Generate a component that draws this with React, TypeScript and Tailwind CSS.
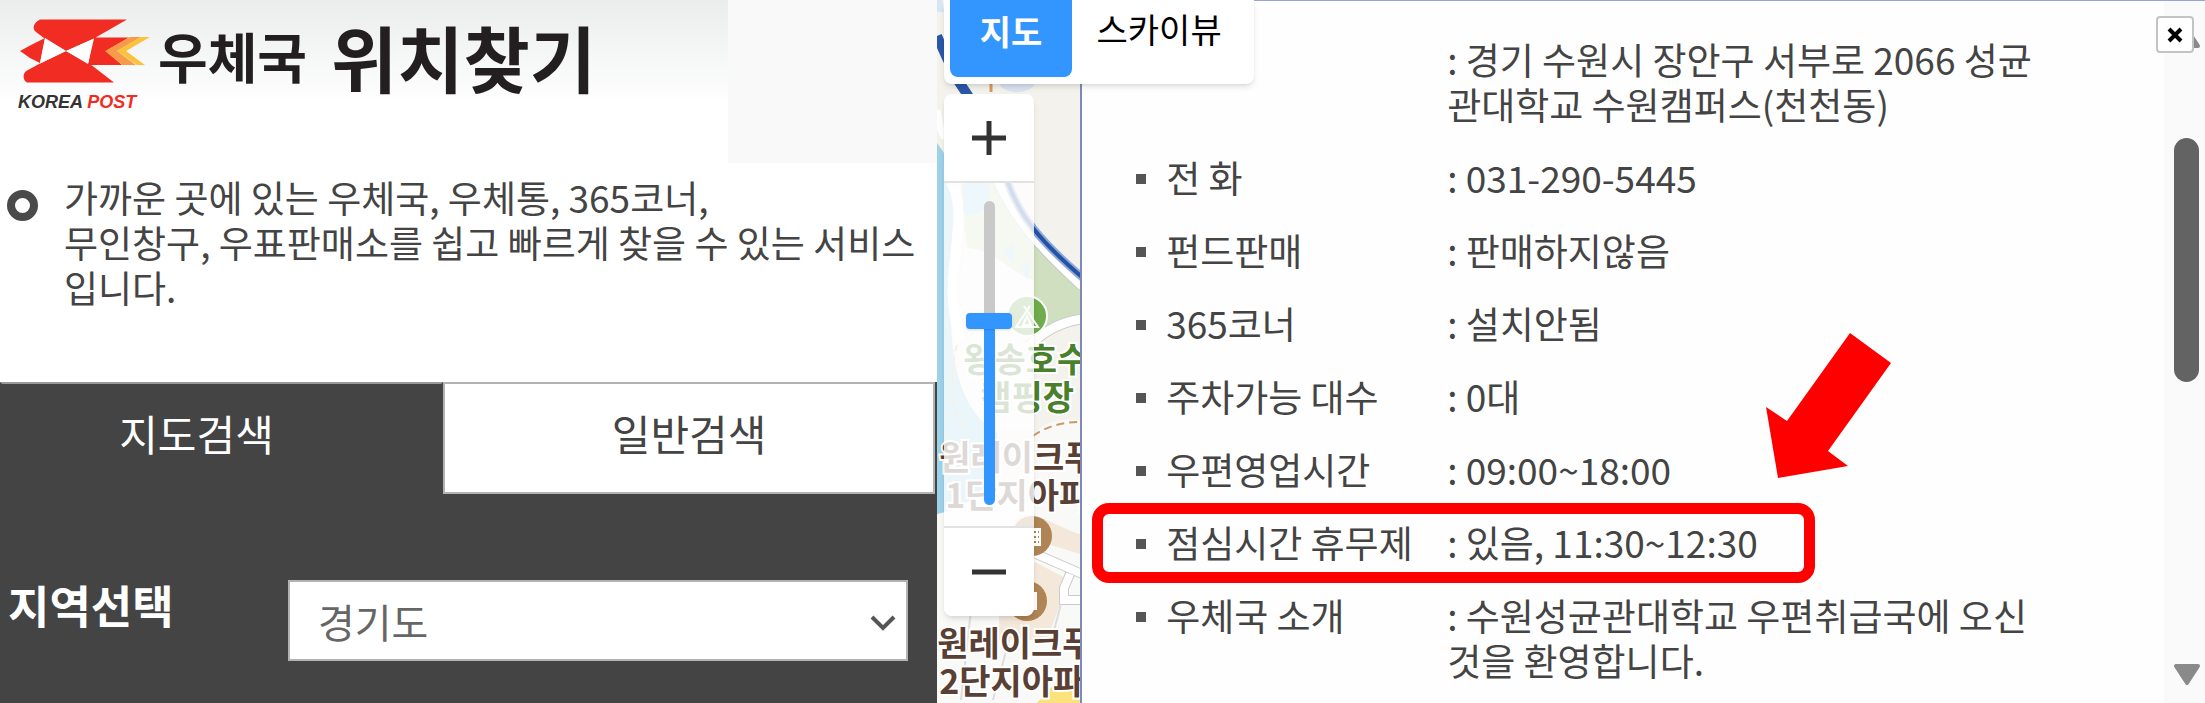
import { useState } from "react";

type Detail = {
  label: string;
  value: string;
  highlighted?: boolean;
};

const details: Detail[] = [
  { label: "", value: "경기 수원시 장안구 서부로 2066 성균관대학교 수원캠퍼스(천천동)" },
  { label: "전 화", value: "031-290-5445" },
  { label: "펀드판매", value: "판매하지않음" },
  { label: "365코너", value: "설치안됨" },
  { label: "주차가능 대수", value: "0대" },
  { label: "우편영업시간", value: "09:00~18:00" },
  { label: "점심시간 휴무제", value: "있음, 11:30~12:30", highlighted: true },
  { label: "우체국 소개", value: "수원성균관대학교 우편취급국에 오신 것을 환영합니다." },
];

function Logo() {
  return (
    <div className="flex w-[132px] flex-col">
      <svg viewBox="18 20 132 66" className="h-[66px] w-[132px]" aria-hidden="true">
        <path
          fill="#f12d23"
          d="M40 21.500h87L93 41l-27 12-22-13-8-6c-4-3-3-9 4-12.500zM45 40L40 65l-10-5-10-7 11-6zM66 53l24 13 24 18.500H27c-4-2-5-9 0-12l13-7zM93 39.500h36L106 53l16 14H88z"
        />
        <path fill="#fff" d="M45 40l21 13-26 12.500zM66 53l28-12.500-6 25.500z" />
        <path fill="#f79a4a" d="M130 39h11l-24 14 19 14h-14l-17-14z" />
        <path fill="#fcc23c" d="M141 39h9l-24 14 19 14h-8l-20-14z" />
      </svg>
      <span className="pt-1 font-['Liberation_Sans',sans-serif] text-[18px] leading-[28px] font-bold whitespace-nowrap text-[#333] italic">
        KOREA <span className="text-[#f12d23]">POST</span>
      </span>
    </div>
  );
}

function SearchPanel() {
  const [tab, setTab] = useState("map");
  const active = "bg-[#444] text-white border-[#444] border-t-[#999]";
  const inactive = "bg-white text-[#444] border-[#b3b3b3]";

  return (
    <section className="flex w-[42.5%] shrink-0 flex-col bg-white">
      <header className="flex h-[163px]">
        <div className="flex flex-1 items-start bg-linear-to-b from-[#ebeded] to-white to-65% pt-[18px] pl-[18px]">
          <Logo />
          <h1 className="flex items-center gap-6 pl-2 leading-[76px] font-bold whitespace-nowrap text-[#231f20]">
            <span className="text-[54px]">우체국</span>
            <span className="text-[72px]">위치찾기</span>
          </h1>
        </div>
        <div className="w-[209px] bg-[#f9f9f9]" />
      </header>

      <div className="flex items-start gap-[26px] pt-3 pl-[7px]">
        <span className="mt-[15px] size-[31px] shrink-0 rounded-full border-8 border-[#4a4a4a]" />
        <p className="text-[37px] leading-[45px] text-[#444]">
          가까운 곳에 있는 우체국, 우체통, 365코너,
          <br />
          무인창구, 우표판매소를 쉽고 빠르게 찾을 수 있는 서비스입니다.
        </p>
      </div>

      <div className="mt-[72px] flex h-[112px] bg-[#444] pr-[2px]">
        <button
          type="button"
          onClick={() => setTab("map")}
          className={`w-[443px] border-2 pr-[50px] pb-3 text-[42px] ${tab === "map" ? active : inactive}`}
        >
          지도검색
        </button>
        <button
          type="button"
          onClick={() => setTab("list")}
          className={`flex-1 border-2 pb-3 text-[42px] ${tab === "list" ? active : inactive}`}
        >
          일반검색
        </button>
      </div>

      <div className="flex flex-1 items-start bg-[#444] pt-[86px] pr-[29px]">
        <label htmlFor="region" className="w-[288px] pl-2 text-[45px] leading-[50px] font-bold text-white">
          지역선택
        </label>
        <div className="relative flex-1">
          <select
            id="region"
            className="h-[81px] w-full appearance-none border-2 border-[#b3b3b3] bg-white px-7 text-[40px] text-[#666]"
          >
            <option>경기도</option>
          </select>
          <svg viewBox="0 0 26 16" className="pointer-events-none absolute top-[35px] right-3 w-[26px]" aria-hidden="true">
            <path d="M2 2l11 11L24 2" fill="none" stroke="#555" strokeWidth="4" />
          </svg>
        </div>
      </div>
    </section>
  );
}

function MapTiles() {
  return (
    <svg viewBox="0 0 143 703" preserveAspectRatio="xMinYMin slice" className="absolute inset-0 h-full w-full" aria-hidden="true">
      <rect width="143" height="703" fill="#f4f2ed" />
      <path d="M0 500h143v203H0zM92 440c12-18 30-22 51-20v100H92z" fill="#f9f9f8" />
      <path d="M24 182h38c20 30 40 60 81 105v30c-20 2-36 12-46 24L30 250z" fill="#d0dfbf" />
      <path d="M26 182h26v22c-10 14-20 12-26 8z" fill="#a8d6ea" />
      <path d="M28 248c30 0 46 26 68 32v150H38c-20-40-20-110-10-182z" fill="#f7f7f7" />
      <path d="M66 250l12-6-2 20zM84 268l10-8-4 20z" fill="#a8d6ea" />
      <path d="M0 143l14 20c10 40-6 90 0 150 0 60 14 100 46 120 0 40-10 70-60 81z" fill="#9dd2e8" />
      <path d="M14 182c18 34-2 80 2 120 2 20 4 30 8 40" fill="none" stroke="#fff" strokeWidth="10" />
      <path d="M20 345c-8 30-6 60 6 84" fill="none" stroke="#e0b27c" strokeWidth="2" strokeDasharray="6 5" />
      <path d="M0 0h5l2 12H0z" fill="#d6e6f5" />
      <path d="M0 36l10 22 12 24 10 15" fill="none" stroke="#2b57a8" strokeWidth="10" />
      <path d="M54 80v12" stroke="#d99a5b" strokeWidth="3" />
      <path d="M62 84h36c-6 10-28 12-36 0z" fill="#dbe2f2" />
      <path d="M0 110c2 16 4 22 8 28" fill="none" stroke="#fff" strokeWidth="7" />
      <path d="M60 175c22 50 50 76 86 110" fill="none" stroke="#c8c8c8" strokeWidth="14" />
      <path d="M60 175c22 50 50 76 86 110" fill="none" stroke="#fff" strokeWidth="12" />
      <path d="M70 180c12 36 34 62 76 98" fill="none" stroke="#8fa9d8" strokeWidth="8" />
      <path d="M70 180c12 36 34 62 76 98" fill="none" stroke="#2453a6" strokeWidth="4" />
      <path d="M92 346c14-14 30-24 53-27" fill="none" stroke="#ccc" strokeWidth="11" />
      <path d="M92 346c14-14 30-24 53-27" fill="none" stroke="#fff" strokeWidth="9" />
      <circle cx="90" cy="316" r="20" fill="#6fac4b" stroke="#fff" strokeWidth="2" />
      <path d="M87 306l14 21H79l14-21M90 316l-4 9h8z" fill="none" stroke="#fff" strokeWidth="2" />
      <path d="M96 436c14-10 30-14 47-14" fill="none" stroke="#c99a68" strokeWidth="2" strokeDasharray="8 5" />
      <path d="M76 520c20-14 40 6 67 14v20l-45-14zM98 562l34 18-22 60H62v-30z" fill="#f3e8da" />
      <path d="M90 550l55 24M145 600h-18v-12l6-14" fill="none" stroke="#ccc" strokeWidth="10" />
      <path d="M90 550l55 24M145 600h-18v-12l6-14" fill="none" stroke="#fff" strokeWidth="8" />
      <path d="M34 610l-10 90M72 640l-16 60M124 604l-8 30" stroke="#ddd" strokeWidth="2" />
      <circle cx="95" cy="536" r="20" fill="#b08454" />
      <path d="M90 528h14v18H90z" fill="#fff" />
      <path d="M93 532h9M93 537h9M93 542h9" stroke="#b08454" strokeWidth="2" strokeDasharray="2 2" />
      <circle cx="90" cy="601" r="20" fill="#b08454" />
      <path d="M84 592h16v18H84z" fill="#fff" />
      <path d="M100 703l18-20 20-4v5l5 4v15z" fill="#fbe27a" />
    </svg>
  );
}

function ZoomControl() {
  const [zoom, setZoom] = useState(61);
  const fill = 5 / 2 + ((100 - zoom) * 95) / 100;

  return (
    <div className="absolute top-[94px] left-[7px] flex w-[90px] flex-col overflow-hidden rounded-lg shadow-md">
      <button
        type="button"
        aria-label="확대"
        onClick={() => setZoom(Math.min(100, zoom + 10))}
        className="flex h-[89px] items-center justify-center border-b-2 border-[#e2e2e2] bg-white"
      >
        <svg viewBox="0 0 34 34" className="size-[34px]" aria-hidden="true">
          <path d="M17 0v34M0 17h34" stroke="#333" strokeWidth="5" />
        </svg>
      </button>
      <div className="flex h-[343px] justify-center bg-white/80 pt-[18px]">
        <input
          type="range"
          aria-label="지도 확대 수준"
          value={zoom}
          onChange={(e) => setZoom(Number(e.target.value))}
          style={{ "--fill": `${fill}%` } as React.CSSProperties}
          className="h-[304px] w-[46px] appearance-none bg-transparent [direction:rtl] [writing-mode:vertical-lr] [&::-webkit-slider-runnable-track]:mx-auto [&::-webkit-slider-runnable-track]:h-full [&::-webkit-slider-runnable-track]:w-[11px] [&::-webkit-slider-runnable-track]:rounded-full [&::-webkit-slider-runnable-track]:bg-[linear-gradient(to_bottom,#c9c9c9_var(--fill),#3396ff_var(--fill))] [&::-webkit-slider-thumb]:-ml-[18px] [&::-webkit-slider-thumb]:h-[16px] [&::-webkit-slider-thumb]:w-[46px] [&::-webkit-slider-thumb]:appearance-none [&::-webkit-slider-thumb]:rounded [&::-webkit-slider-thumb]:bg-[#3396ff] [&::-webkit-slider-thumb]:shadow"
        />
      </div>
      <button
        type="button"
        aria-label="축소"
        onClick={() => setZoom(Math.max(0, zoom - 10))}
        className="flex h-[90px] items-center justify-center border-t-2 border-[#e2e2e2] bg-white"
      >
        <svg viewBox="0 0 34 34" className="size-[34px]" aria-hidden="true">
          <path d="M0 17h34" stroke="#333" strokeWidth="5" />
        </svg>
      </button>
    </div>
  );
}

function MapPanel() {
  const label =
    "absolute text-[34px] leading-[38px] font-bold whitespace-nowrap [paint-order:stroke_fill] [-webkit-text-stroke:4px_white]";

  return (
    <section className="relative z-10 w-[145px] shrink-0 border-r-2 border-[#7f89b8]">
      <div className="absolute inset-0 overflow-hidden">
        <MapTiles />
        <span className={`${label} top-[339px] left-[26px] text-[#4a7f2c]`}>왕송호수</span>
        <span className={`${label} top-[377px] left-[43px] text-[#4a7f2c]`}>캠핑장</span>
        <span className={`${label} top-[437px] left-[2px] text-[#5a4034]`}>원레이크푸</span>
        <span className={`${label} top-[475px] left-[8px] text-[#5a4034]`}>1단지아파</span>
        <span className={`${label} top-[623px] left-0 text-[#5a4034]`}>원레이크푸</span>
        <span className={`${label} top-[661px] left-[2px] text-[#5a4034]`}>2단지아파</span>
        <ZoomControl />
      </div>
      <div className="absolute top-0 left-[7px] flex h-[84px] w-[310px] rounded-b-lg bg-white pl-[6px] text-[34px] shadow-md">
        <button type="button" className="h-[77px] w-[122px] rounded-b-lg bg-[#3396ff] pb-4 font-bold text-white">
          지도
        </button>
        <button type="button" className="h-[77px] flex-1 pr-2 pb-5 whitespace-nowrap text-black">
          스카이뷰
        </button>
      </div>
    </section>
  );
}

function DetailPanel() {
  return (
    <section className="relative flex min-w-0 flex-1 border-t border-[#9aa5cf] bg-[#fefefe]">
      <dl className="flex flex-1 flex-col gap-7 pt-[36px] pl-[54px] text-[37px] leading-[45px] text-[#444]">
        {details.map(({ label, value, highlighted }) => (
          <div key={value} className="relative flex">
            <dt className="flex w-[311px] shrink-0 gap-5">
              {label && <span className="mt-[19px] size-[10px] bg-[#555]" />}
              {label}
            </dt>
            <dd className="max-w-[600px]">: {value}</dd>
            {highlighted && (
              <div className="absolute -top-[17px] -left-[44px] h-[80px] w-[723px] rounded-[17px] border-[11px] border-[#f00]" />
            )}
          </div>
        ))}
      </dl>

      <svg viewBox="0 0 125 145" className="absolute top-[332px] left-[684px] w-[125px]" aria-hidden="true">
        <path d="M84 0l41 30-63 88 20 15-70 12L0 74l21 14z" fill="#f00" />
      </svg>

      <div className="flex w-[41px] flex-col items-center justify-between bg-[#fafafa] pt-[137px] pb-[17px] pl-1">
        <div className="h-[244px] w-[25px] rounded-full bg-[#636363]" />
        <svg viewBox="0 0 28 22" className="w-[28px]" aria-hidden="true">
          <path d="M3 2h22L14 19z" fill="#8a8a8a" stroke="#8a8a8a" strokeWidth="4" strokeLinejoin="round" />
        </svg>
      </div>

      <svg viewBox="0 0 28 22" className="absolute top-[26px] right-[4px] w-[28px]" aria-hidden="true">
        <path d="M3 19h22L14 2z" fill="#8a8a8a" stroke="#8a8a8a" strokeWidth="4" strokeLinejoin="round" />
      </svg>
      <button
        type="button"
        aria-label="닫기"
        className="absolute top-[15px] right-[11px] flex h-[37px] w-[38px] items-center justify-center rounded-sm border-2 border-[#c4c4c4] bg-white"
      >
        <svg viewBox="0 0 16 16" className="size-4" aria-hidden="true">
          <path d="M2 2l12 12M14 2L2 14" stroke="#000" strokeWidth="4" />
        </svg>
      </button>
    </section>
  );
}

export default function App() {
  return (
    <main className="flex min-h-screen overflow-hidden bg-white font-['Noto_Sans_CJK_KR',sans-serif]">
      <SearchPanel />
      <MapPanel />
      <DetailPanel />
    </main>
  );
}
